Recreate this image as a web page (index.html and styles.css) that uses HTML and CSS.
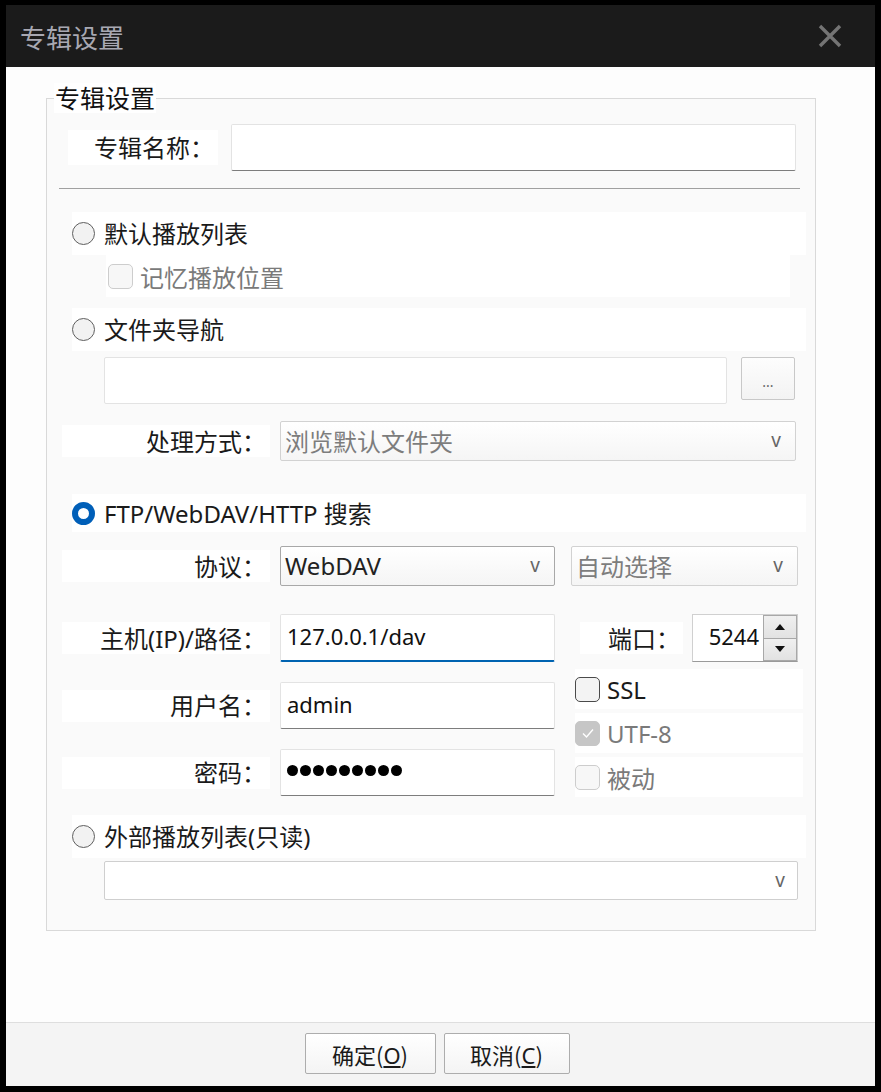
FILE: index.html
```html
<!DOCTYPE html>
<html lang="zh-CN">
<head>
    <meta charset="UTF-8">
    <title>专辑设置</title>
    <link rel="stylesheet" href="styles.css">
</head>
<body>
    <div class="window">
        <div class="titlebar">
            <span class="title">专辑设置</span>
            <svg class="close" width="24" height="24" viewBox="0 0 24 24">
                <path d="M2 2 L22 22 M22 2 L2 22" stroke="#747474" stroke-width="3.4" fill="none"/>
            </svg>
        </div>

        <div class="main">
            <fieldset class="group">
                <legend>专辑设置</legend>

                <div class="name-row">
                    <label class="cell-label name-label">专辑名称：</label>
                    <div class="field name-input"></div>
                </div>

                <div class="sep"></div>

                <div class="option first">
                    <span class="radio"></span>默认播放列表
                </div>
                <div class="check-row sub">
                    <span class="check disabled"></span><span class="muted">记忆播放位置</span>
                </div>

                <div class="option second">
                    <span class="radio"></span>文件夹导航
                </div>
                <div class="path-row">
                    <div class="field path-input"></div>
                    <button class="browse">...</button>
                </div>
                <div class="form-row mode-row">
                    <label class="cell-label">处理方式：</label>
                    <div class="select disabled wide"><span>浏览默认文件夹</span><span class="arrow">v</span></div>
                </div>

                <div class="option third">
                    <span class="radio checked"></span>FTP/WebDAV/HTTP 搜索
                </div>
                <div class="form-row proto-row">
                    <label class="cell-label">协议：</label>
                    <div class="select proto"><span>WebDAV</span><span class="arrow">v</span></div>
                    <div class="select disabled enc"><span>自动选择</span><span class="arrow">v</span></div>
                </div>

                <div class="net-block">
                    <div class="net-left">
                        <div class="form-row">
                            <label class="cell-label">主机(IP)/路径：</label>
                            <div class="field text focus">127.0.0.1/dav</div>
                        </div>
                        <div class="form-row">
                            <label class="cell-label">用户名：</label>
                            <div class="field text">admin</div>
                        </div>
                        <div class="form-row">
                            <label class="cell-label">密码：</label>
                            <div class="field text dots">
                                <i></i><i></i><i></i><i></i><i></i><i></i><i></i><i></i><i></i>
                            </div>
                        </div>
                    </div>
                    <div class="net-right">
                        <div class="port-row">
                            <label class="port-label">端口：</label>
                            <div class="spinner">
                                <span class="spin-value">5244</span>
                                <div class="spin-buttons">
                                    <span class="spin up"></span>
                                    <span class="spin down"></span>
                                </div>
                            </div>
                        </div>
                        <div class="check-row side">
                            <span class="check"></span>SSL
                        </div>
                        <div class="check-row side">
                            <span class="check disabled checked">
                                <svg width="14" height="14" viewBox="0 0 14 14"><path d="M2 7.5 L5.5 11 L12 3.5" stroke="#fff" stroke-width="1.4" fill="none"/></svg>
                            </span><span class="muted">UTF-8</span>
                        </div>
                        <div class="check-row side">
                            <span class="check disabled"></span><span class="muted">被动</span>
                        </div>
                    </div>
                </div>

                <div class="option fourth">
                    <span class="radio"></span>外部播放列表(只读)
                </div>
                <div class="select ext"><span></span><span class="arrow">v</span></div>
            </fieldset>
        </div>

        <div class="footer">
            <button class="btn ok">确定(<u>O</u>)</button>
            <button class="btn cancel">取消(<u>C</u>)</button>
        </div>
    </div>
</body>
</html>
```

FILE: styles.css
```css
* {
    margin: 0;
    padding: 0;
    box-sizing: border-box;
    font-family: 'Noto Sans', 'Noto Sans CJK SC', sans-serif;
}

body {
    background-color: #000;
    width: 881px;
    height: 1092px;
    padding: 5px 6px 6px 6px;
}

.window {
    width: 869px;
    height: 1081px;
    background-color: #fdfdfd;
    display: flex;
    flex-direction: column;
}

/* 标题栏 */
.titlebar {
    height: 62px;
    background-color: #1b1b1b;
    display: flex;
    align-items: center;
    justify-content: space-between;
    padding: 0 33px 0 14px;
}

.titlebar .title {
    font-size: 26px;
    color: #a8a8b2;
    font-family: 'Noto Sans CJK SC', sans-serif;
}

/* 主体 */
.main {
    flex: 1;
    padding-top: 16px;
}

.group {
    margin-left: 40px;
    width: 770px;
    border: 1px solid #d9d9d9;
    background-color: #fafafa;
    padding: 0 9px 30px 12px;
}

.group legend {
    font-size: 25px;
    line-height: 30px;
    color: #111;
    background-color: #fff;
    margin-left: -5px;
    padding: 0 1px;
}

.cell-label {
    background-color: #fff;
    font-size: 24px;
    color: #1a1a1a;
    height: 32px;
    display: flex;
    align-items: center;
    justify-content: flex-end;
    padding-right: 4px;
    padding-bottom: 2px;
    flex-shrink: 0;
}

.field {
    background-color: #fff;
    border: 1px solid #e3e3e3;
    border-bottom: 1px solid #7d7d7d;
    border-radius: 2px;
}

.name-row {
    display: flex;
    align-items: center;
    margin-top: 11px;
    height: 47px;
}

.name-label {
    margin-left: 9px;
    width: 150px;
    height: 35px;
    padding-right: 4px;
}

.name-input {
    margin-left: 13px;
    width: 565px;
    height: 47px;
}

.sep {
    margin-top: 17px;
    height: 1px;
    width: 741px;
    background-color: #a0a0a0;
}

/* 单选行 */
.option {
    display: flex;
    align-items: center;
    margin-left: 13px;
    width: 734px;
    height: 43px;
    background-color: #fff;
    font-size: 24px;
    color: #1a1a1a;
    padding-bottom: 2px;
}

.option.first { margin-top: 23px; }
.option.second { margin-top: 11px; }
.option.third { margin-top: 33px; height: 38px; }
.option.fourth { margin-top: 18px; }

.radio {
    width: 23px;
    height: 23px;
    border-radius: 50%;
    border: 1.5px solid #5f5f5f;
    background-color: #f2f2f2;
    margin-right: 9px;
    margin-top: 2px;
    flex-shrink: 0;
}

.radio.checked {
    border: 6.5px solid #005fb8;
    background-color: #fff;
}

/* 复选框 */
.check-row {
    display: flex;
    align-items: center;
    background-color: #fff;
    font-size: 24px;
    color: #1a1a1a;
}

.check-row.sub {
    margin-left: 47px;
    width: 684px;
    height: 42px;
    padding-left: 2px;
}

.check {
    width: 25px;
    height: 25px;
    border: 1.5px solid #4a4a4a;
    border-radius: 5px;
    background-color: #f3f3f3;
    margin-right: 7px;
    flex-shrink: 0;
    display: flex;
    align-items: center;
    justify-content: center;
}

.check.disabled {
    border-color: #cdcdcd;
    background-color: #f7f7f7;
}

.check.disabled.checked {
    border-color: #c6c6c6;
    background-color: #c6c6c6;
}

.muted {
    color: #7a7a7a;
}

/* 路径 */
.path-row {
    display: flex;
    align-items: flex-start;
    margin-top: 6px;
    margin-left: 45px;
    gap: 14px;
}

.path-input {
    width: 623px;
    height: 47px;
    border-bottom-color: #e3e3e3;
}

.browse {
    width: 54px;
    height: 43px;
    border: 1px solid #c8c8c8;
    border-radius: 2px;
    background: linear-gradient(#fdfdfd, #f3f3f3);
    font-size: 14px;
    color: #666;
    padding-top: 6px;
}

/* 表单行 */
.form-row {
    display: flex;
    align-items: center;
    margin-left: 3px;
    gap: 10px;
}

.form-row .cell-label {
    width: 208px;
}

.mode-row {
    margin-top: 17px;
}

.proto-row {
    margin-top: 14px;
}

.select {
    height: 40px;
    border: 1px solid #a8a8a8;
    border-radius: 2px;
    background: linear-gradient(#ffffff, #f5f5f5);
    display: flex;
    align-items: center;
    justify-content: space-between;
    padding: 0 14px 2px 4px;
    font-size: 24px;
    color: #222;
}

.select.disabled {
    border-color: #d2d2d2;
    color: #7d7d7d;
}

.select .arrow {
    font-size: 19px;
    color: #666;
    font-family: 'Noto Sans', sans-serif;
}

.select.wide { width: 516px; }
.select.proto { width: 275px; }
.select.enc { width: 227px; margin-left: 6px; }

.select.ext {
    margin-left: 45px;
    margin-top: 3px;
    width: 694px;
    height: 39px;
    border-color: #cfcfcf;
    background: #fff;
    padding-right: 12px;
}

/* 网络设置区域 */
.net-block {
    display: flex;
    margin-top: 28px;
    gap: 20px;
}

.net-left {
    display: flex;
    flex-direction: column;
    gap: 20px;
}

.net-left .field.text {
    width: 275px;
    height: 48px;
    font-size: 22px;
    color: #111;
    display: flex;
    align-items: center;
    padding-left: 6px;
    padding-bottom: 4px;
}

.net-left .form-row + .form-row .field.text {
    height: 47px;
}

.field.focus {
    border-bottom: 2px solid #0063b1;
}

.field.dots {
    gap: 2px;
}

.field.dots i {
    width: 11px;
    height: 11px;
    border-radius: 50%;
    background-color: #000;
}

.net-right {
    display: flex;
    flex-direction: column;
    gap: 4px;
}

.port-row {
    display: flex;
    align-items: center;
    height: 48px;
    margin-bottom: 3px;
}

.port-label {
    margin-left: 5px;
    width: 103px;
    height: 32px;
    background-color: #fff;
    font-size: 24px;
    color: #1a1a1a;
    display: flex;
    align-items: center;
    padding-left: 28px;
    padding-bottom: 2px;
}

.spinner {
    margin-left: 9px;
    width: 106px;
    height: 48px;
    border: 1px solid #d0d0d0;
    border-bottom-color: #9a9a9a;
    background-color: #fff;
    display: flex;
    align-items: stretch;
}

.spin-value {
    flex: 1;
    font-size: 22px;
    color: #111;
    padding-right: 4px;
    display: flex;
    align-items: center;
    justify-content: flex-end;
    padding-bottom: 4px;
}

.spin-buttons {
    width: 34px;
    display: flex;
    flex-direction: column;
    border: 1px solid #a8a8a8;
}

.spin {
    flex: 1;
    background: linear-gradient(#f0f0f0, #e2e2e2);
    position: relative;
}

.spin.up {
    border-bottom: 1px solid #a8a8a8;
}

.spin::after {
    content: '';
    position: absolute;
    left: 50%;
    top: 50%;
    transform: translate(-50%, -50%);
    border-left: 5px solid transparent;
    border-right: 5px solid transparent;
}

.spin.up::after {
    border-bottom: 6px solid #111;
}

.spin.down::after {
    border-top: 6px solid #111;
}

.check-row.side {
    width: 228px;
    height: 40px;
}

/* 底部按钮 */
.footer {
    height: 64px;
    border-top: 1px solid #dedede;
    background-color: #f4f4f4;
    display: flex;
    justify-content: center;
    align-items: flex-start;
    padding-top: 10px;
    padding-right: 7px;
    gap: 8px;
}

.btn {
    height: 41px;
    border: 1px solid #adadad;
    border-radius: 2px;
    background: linear-gradient(#ffffff, #f4f4f4);
    font-size: 22px;
    color: #1a1a1a;
    font-family: 'Noto Sans CJK SC', sans-serif;
}

.btn.ok { width: 131px; }
.btn.cancel { width: 126px; }
```
